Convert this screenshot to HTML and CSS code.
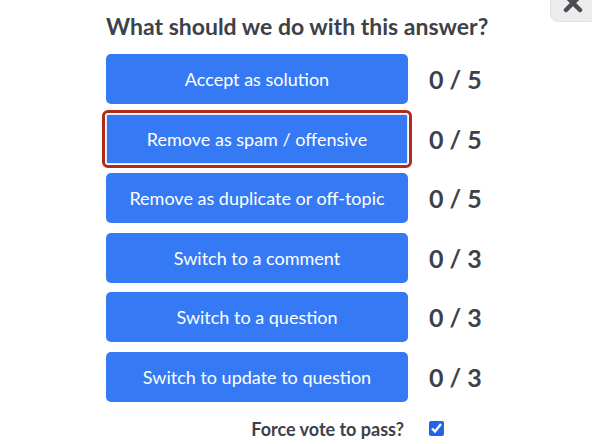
FILE: index.html
```html
<!DOCTYPE html>
<html lang="en">
<head>
  <meta charset="UTF-8">
  <meta name="viewport" content="width=device-width, initial-scale=1.0">
  <title>Review answer</title>
  <link rel="stylesheet" href="styles.css">
</head>
<body>
  <button class="close" aria-label="Close">
    <svg width="22" height="22" viewBox="0 0 22 22"><path d="M4 4 L18 18 M18 4 L4 18" stroke="#4a4d52" stroke-width="4.5" stroke-linecap="round"/></svg>
  </button>
  <div class="container">
    <h2>What should we do with this answer?</h2>
    <div class="votes">
      <button class="action">Accept as solution</button>
      <span class="count">0 / 5</span>
      <button class="action selected">Remove as spam / offensive</button>
      <span class="count">0 / 5</span>
      <button class="action">Remove as duplicate or off-topic</button>
      <span class="count">0 / 5</span>
      <button class="action">Switch to a comment</button>
      <span class="count">0 / 3</span>
      <button class="action">Switch to a question</button>
      <span class="count">0 / 3</span>
      <button class="action">Switch to update to question</button>
      <span class="count">0 / 3</span>
      <label class="force" for="force">Force vote to pass?</label>
      <span class="check"><input type="checkbox" id="force" checked></span>
    </div>
  </div>
</body>
</html>
```

FILE: styles.css
```css
body {
  font-family: Lato, "Liberation Sans", sans-serif;
  margin: 0;
  padding: 0;
  background: #fff;
  color: #3d4149;
}
.close {
  position: absolute;
  top: -8px;
  right: -6px;
  width: 48px;
  height: 30px;
  background: #ececec;
  border: 1px solid #e2e2e2;
  border-radius: 8px;
  padding: 0;
  display: flex;
  align-items: center;
  justify-content: center;
  overflow: hidden;
}
.close svg {
  margin-left: -2px;
  margin-top: -8px;
}
.container {
  width: 380px;
  margin: 0 auto;
  padding-top: 11px;
}
h2 {
  font-size: 23px;
  font-weight: bold;
  margin: 0 0 13px;
  line-height: 30px;
  text-align: center;
  white-space: nowrap;
}
.votes {
  display: grid;
  grid-template-columns: 302px 1fr;
  column-gap: 21px;
  row-gap: 9.6px;
  align-items: center;
}
.action {
  height: 50px;
  background: #3679f5;
  color: #fff;
  border: none;
  border-radius: 5px;
  font-family: inherit;
  font-size: 18px;
  padding: 0;
}
.action.selected {
  border: 1px solid #dfe6f3;
  border-radius: 2px;
  outline: 3px solid #b22a1b;
  outline-offset: 1px;
}
.count {
  font-size: 25px;
  font-weight: bold;
}
.force {
  font-size: 18px;
  font-weight: bold;
  text-align: right;
  padding-right: 4px;
  line-height: 30px;
  margin-top: 2px;
}
.check {
  display: flex;
  align-items: center;
  height: 30px;
  margin-top: 2px;
}
.check input {
  width: 15px;
  height: 15px;
  margin: 0;
  accent-color: #2463e6;
}
```
